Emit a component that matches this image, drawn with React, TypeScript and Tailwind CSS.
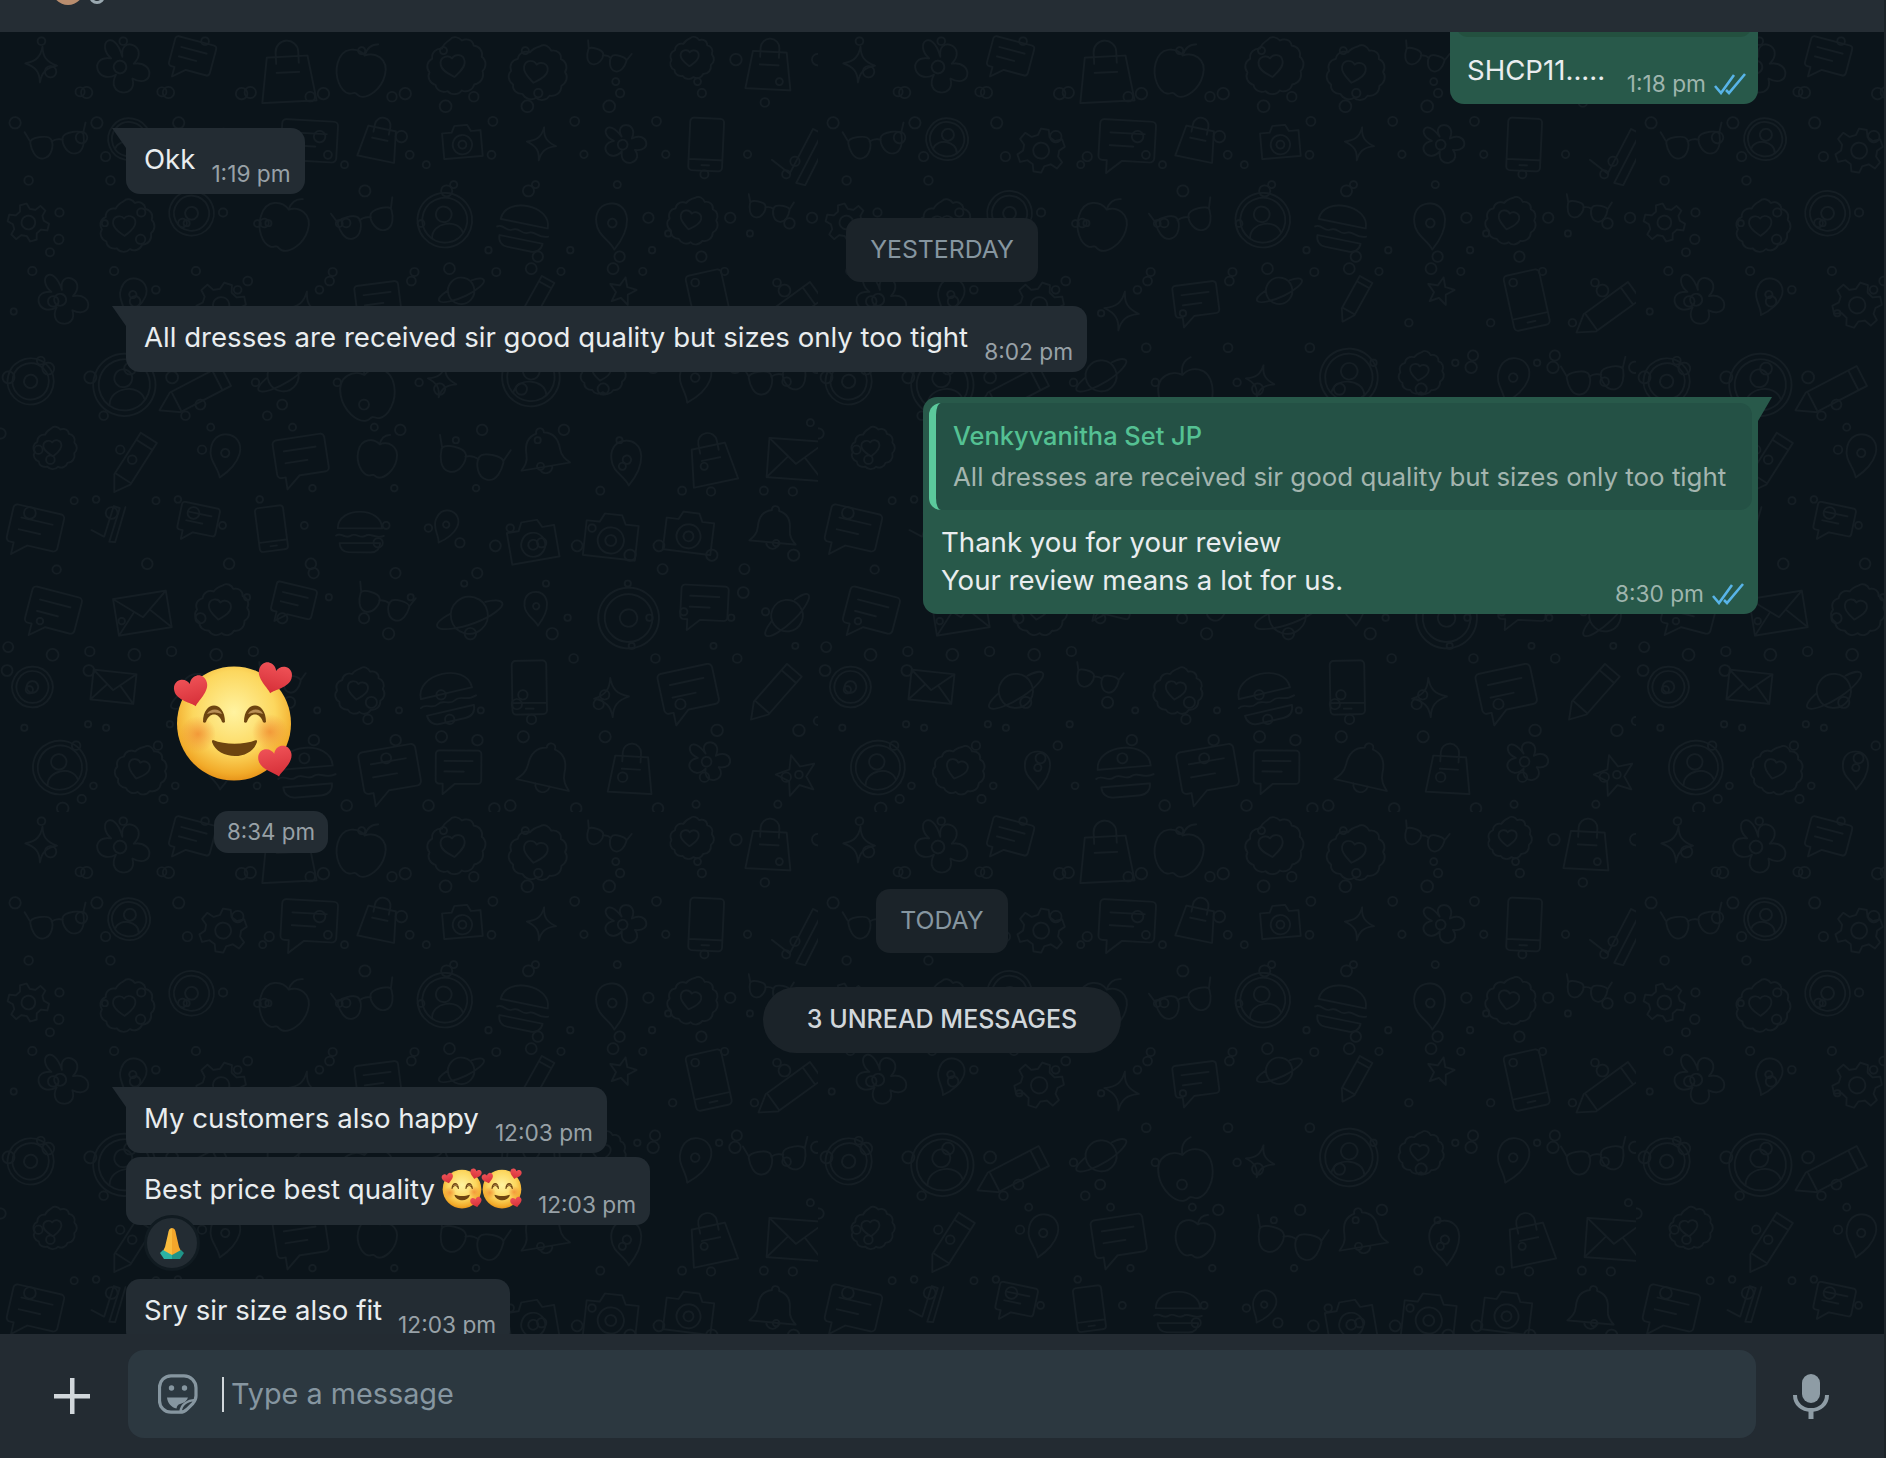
const FONT = "font-['Inter','Liberation_Sans',sans-serif]";

// doodles of the wallpaper, each one drawn in a 64 box
const DOODLES: Record<string, string> = {
  cloudHeart:
    "M32 6c4-4 9-1 11 2 5-2 10 1 10 6 5 1 8 6 6 11 4 4 3 10-1 13 1 6-3 11-9 11-2 5-8 7-12 4-4 4-10 3-13-1-5 1-10-2-10-7-5-2-7-8-4-12-3-5-1-10 4-12 0-6 5-9 10-8 2-4 6-6 8-7z M32 23c3-4 11-3 11 4 0 6-7 10-11 13-4-3-11-7-11-13 0-7 8-8 11-4z",
  star: "M32 14l5 12 13 1-10 9 3 13-11-7-11 7 3-13-10-9 13-1z",
  spark: "M32 14c1 10 5 15 16 18-11 3-15 8-16 18-1-10-5-15-16-18 11-3 15-8 16-18z",
  planet:
    "M32 14a18 18 0 1 0 .1 0z M14 36C6 44 3 50 6 52c4 3 20-4 34-15S62 14 59 11c-2-2-8-1-16 4",
  camera:
    "M8 20h12l4-8h16l4 8h12v32H8z M32 24a12 12 0 1 0 .1 0z M32 31a5 5 0 1 0 .1 0z",
  envelope: "M6 16h52v36H6z M6 16l26 22 26-22 M6 52l18-20 M58 52L40 32",
  glasses:
    "M4 24c0-6 20-6 22 0s-2 18-11 18S4 30 4 24z M38 24c2-6 22-6 22 0s-2 18-11 18-13-12-11-18z M26 26c4-2 8-2 12 0 M4 22L0 12 M60 22l4-10",
  bell: "M32 6a4 4 0 0 1 4 5c10 2 14 10 14 20 0 8 4 12 8 16H6c4-4 8-8 8-16 0-10 4-18 14-20a4 4 0 0 1 4-5z M25 47a7 7 0 0 0 14 0",
  pencil: "M44 6l14 14-36 36-18 4 4-18z M38 12l14 14 M10 42l12 12",
  apple:
    "M32 20c8-6 24-4 24 14 0 14-10 26-18 26-3 0-4-2-6-2s-3 2-6 2C18 60 8 48 8 34c0-18 16-20 24-14z M32 20c0-6 2-12 10-14",
  flower:
    "M32 22c-8-20 24-16 12 4 20-8 24 20 2 14 10 18-22 22-16 0-16 14-30-12-8-14-18-10-4-30 10-4z M32 26a6 6 0 1 0 .1 0z",
  wheel: "M32 4a28 28 0 1 0 .1 0z M32 10a22 22 0 1 0 .1 0z M32 24a8 8 0 1 0 .1 0z",
  bag: "M14 20h36l6 40H8z M22 26v-10a10 10 0 0 1 20 0v10 M22 34h20",
  burger:
    "M8 28c0-24 48-24 48 0z M6 36c6-4 10 4 16 0s10 4 16 0 10 4 20 0 M10 44h44c0 6-4 10-10 10H20c-6 0-10-4-10-10z",
  phone: "M18 4h28a4 4 0 0 1 4 4v48a4 4 0 0 1-4 4H18a4 4 0 0 1-4-4V8a4 4 0 0 1 4-4z M14 48h36 M28 54h8",
  bubble: "M10 8h44a4 4 0 0 1 4 4v30a4 4 0 0 1-4 4H28L14 58V46h-4a4 4 0 0 1-4-4V12a4 4 0 0 1 4-4z M16 20h32 M16 32h22",
  person: "M32 4a28 28 0 1 0 .1 0z M32 9a23 23 0 1 0 .1 0z M32 18a8 8 0 1 0 .1 0z M16 48c2-16 30-16 32 0",
  pin: "M32 10c10 0 16 8 14 18-2 9-10 18-18 24-2-10-12-16-10-28 1-8 6-14 14-14z M32 24a4 4 0 1 0 .1 0z",
  check: "M8 36l16 12L44 8l8 4-22 44 8 2L60 12",
  gear: "M28 10h8l2 7 6 3 7-3 4 7-5 5v6l5 5-4 7-7-3-6 3-2 7h-8l-2-7-6-3-7 3-4-7 5-5v-6l-5-5 4-7 7 3 6-3z M32 24a8 8 0 1 0 .1 0z",
};

const KINDS = Object.keys(DOODLES);
const TILE_W = 818;
const TILE_H = 780;

// fixed pseudo random, so the wallpaper comes out the same every time
function rand(i: number) {
  const x = Math.sin(i * 127.1 + 3.7) * 43758.5453;
  return x - Math.floor(x);
}

function Wallpaper() {
  const cols = 10;
  const rows = 10;
  const cw = TILE_W / cols;
  const ch = TILE_H / rows;
  const items: { kind: string; x: number; y: number; s: number; r: number }[] = [];
  const dots: { x: number; y: number; r: number }[] = [];
  for (let row = 0; row < rows; row++) {
    for (let col = 0; col < cols; col++) {
      const i = row * cols + col;
      items.push({
        kind: KINDS[Math.floor(rand(i) * KINDS.length)],
        x: col * cw + (row % 2) * 20 + rand(i + 100) * 10,
        y: row * ch + rand(i + 200) * 10,
        s: 0.7 + rand(i + 300) * 0.45,
        r: (rand(i + 400) - 0.5) * 36,
      });
      for (let d = 0; d < 3; d++) {
        dots.push({
          x: col * cw + rand(i + 500 + d) * cw,
          y: row * ch + rand(i + 600 + d) * ch,
          r: 3 + rand(i + 700 + d) * 3,
        });
      }
    }
  }
  return (
    <svg className="absolute inset-0 h-full w-full" aria-hidden="true">
      <defs>
        <pattern id="doodles" width={TILE_W} height={TILE_H} patternUnits="userSpaceOnUse">
          {items.map((it, i) => (
            <path
              key={i}
              d={DOODLES[it.kind]}
              fill="none"
              stroke="#151e24"
              strokeWidth={1.7}
              vectorEffect="non-scaling-stroke"
              strokeLinejoin="round"
              strokeLinecap="round"
              transform={`translate(${it.x} ${it.y}) rotate(${it.r} 32 32) scale(${it.s})`}
            />
          ))}
          {dots.map((d, i) => (
            <circle key={i} cx={d.x} cy={d.y} r={d.r} fill="none" stroke="#151e24" strokeWidth={1.7} />
          ))}
        </pattern>
      </defs>
      <rect width="100%" height="100%" fill="url(#doodles)" />
    </svg>
  );
}

function Heart({ x, y, s, r }: { x: number; y: number; s: number; r: number }) {
  return (
    <path
      transform={`translate(${x} ${y}) rotate(${r}) scale(${s})`}
      d="M0 14C-3 10-16 4-16-5-16-11-12-14-8-14-4-14-1-11 0-8 1-11 4-14 8-14 12-14 16-11 16-5 16 4 3 10 0 14z"
      fill="url(#emojiHeart)"
    />
  );
}

// the smiling face with hearts
function FaceEmoji({ size }: { size: number }) {
  return (
    <svg width={size} height={size} viewBox="0 0 118 118" overflow="visible" className="shrink-0">
      <circle cx="59" cy="59.500" r="57" fill="url(#emojiFace)" />
      <circle cx="23" cy="70" r="18" fill="url(#emojiCheek)" />
      <circle cx="95" cy="68" r="18" fill="url(#emojiCheek)" />
      <path d="M28 58c0-22 22-22 22 0-1 1-2 1-3 0-3-10-13-10-16 0-1 1-2 1-3 0z" fill="#6d4410" />
      <path d="M69 58c0-22 22-22 22 0-1 1-2 1-3 0-3-10-13-10-16 0-1 1-2 1-3 0z" fill="#6d4410" />
      <path d="M32 50c3-6 13-6 15 0-5-2-10-2-15 0z" fill="#b98f55" />
      <path d="M73 50c3-6 13-6 15 0-5-2-10-2-15 0z" fill="#b98f55" />
      <path d="M38 76c12 5 31 5 43 0 1 0 1 1 1 2-3 9-12 14-22 14s-20-5-23-14c0-1 0-2 1-2z" fill="#6d4410" />
      <Heart x={17} y={28} s={1.05} r={-15} />
      <Heart x={99} y={15} s={1.05} r={15} />
      <Heart x={101} y={98} s={1.05} r={-12} />
    </svg>
  );
}

// shared gradients of the emoji, they sit once at the root
function EmojiDefs() {
  return (
    <svg width="0" height="0" className="absolute" aria-hidden="true">
      <defs>
        <radialGradient id="emojiFace" cx="50%" cy="40%" r="60%">
          <stop offset="0%" stopColor="#fff3a0" />
          <stop offset="60%" stopColor="#fcd75e" />
          <stop offset="90%" stopColor="#f2ab2a" />
          <stop offset="100%" stopColor="#e8951a" />
        </radialGradient>
        <radialGradient id="emojiCheek">
          <stop offset="0%" stopColor="#f08a30" stopOpacity="0.8" />
          <stop offset="100%" stopColor="#f08a30" stopOpacity="0" />
        </radialGradient>
        <linearGradient id="emojiHeart" x1="0" y1="0" x2="0" y2="1">
          <stop offset="0%" stopColor="#ee5156" />
          <stop offset="100%" stopColor="#d62f38" />
        </linearGradient>
      </defs>
    </svg>
  );
}

function PrayEmoji() {
  return (
    <svg width="24" height="32" viewBox="0 0 24 32">
      <path d="M12 1c-2.500 0-3.500 2-4 6L5 20l-3 6 10 3z" fill="#fabc3d" />
      <path d="M12 1c2.500 0 3.500 2 4 6l3 13 3 6-10 3z" fill="#f3a62b" />
      <path d="M0 26l3-3 9 5v4H4z" fill="#2bb3a3" />
      <path d="M24 26l-3-3-9 5v4h8z" fill="#1f9488" />
    </svg>
  );
}

function Ticks() {
  return (
    <svg width="32" height="22" viewBox="0 0 32 22" fill="none" stroke="#58b4e8" strokeWidth="2.600" className="shrink-0">
      <path d="M1 13l6 7L20 2" />
      <path d="M12 17l3 3L31 1" />
    </svg>
  );
}

function Time({ t, read }: { t: string; read?: boolean }) {
  return (
    <span
      className={`flex shrink-0 items-center gap-2 self-end whitespace-nowrap text-[22.700px] leading-[28px] ${
        read ? "text-[#9fb5ae]" : "text-[#98a1a7]"
      }`}
    >
      {t}
      {read && <Ticks />}
    </span>
  );
}

function Incoming({ text, time, tail, emoji, className = "" }: { text: string; time: string; tail?: boolean; emoji?: boolean; className?: string }) {
  return (
    <div
      className={`relative flex w-fit gap-4 self-start rounded-[14px] bg-[#232c33] pt-3 pb-[6px] pr-[14px] pl-[18px] text-[#e9edef] ${
        tail ? "rounded-tl-none" : ""
      } ${className}`}
    >
      {tail && (
        <span className="absolute top-0 left-[-14px] h-[20px] w-[14px] bg-[#232c33] [clip-path:polygon(0_0,100%_0,100%_100%)]" />
      )}
      <span className="flex items-center whitespace-nowrap pb-[10px] text-[27.600px] leading-[38px]">
        {text}
        {emoji && (
          <span className="ml-[7px] flex">
            <FaceEmoji size={40} />
            <FaceEmoji size={40} />
          </span>
        )}
      </span>
      <Time t={time} />
    </div>
  );
}

function DatePill({ label, className = "" }: { label: string; className?: string }) {
  return (
    <div className={`flex h-16 items-center self-center rounded-[14px] bg-[#1b2329] px-6 text-[24.800px] text-[#8696a0] ${className}`}>
      {label}
    </div>
  );
}

function StickerIcon() {
  return (
    <svg width="40" height="40" viewBox="0 0 40 40" fill="none" stroke="#8696a0" strokeWidth="3.200" className="shrink-0">
      <path d="M13 1.800h13a12 12 0 0 1 12 12v8c0 3-1.200 5.500-3 7.500l-5.500 5.500c-2 2-4.500 3.400-7.500 3.400H13a11.500 11.500 0 0 1-11.500-11.500V13.300A11.500 11.500 0 0 1 13 1.800z" />
      <circle cx="13.500" cy="14" r="2.700" fill="#8696a0" stroke="none" />
      <circle cx="26.500" cy="14" r="2.700" fill="#8696a0" stroke="none" />
      <path d="M9 23.500h21c-1 3.500-4 5.500-8 6.500-2 .6-3 2-3.500 4.500-5-1-9-5.500-9.500-11z" fill="#8696a0" stroke="none" />
      <path d="M37 26c-7 .5-14 4-14.500 12" strokeWidth="2.600" />
    </svg>
  );
}

export default function App() {
  return (
    <div className={`flex h-[1458px] w-[1886px] flex-col overflow-hidden border-r-2 border-[#1d2429] bg-[#0b141a] ${FONT}`}>
      <EmojiDefs />
      <header className="flex h-8 shrink-0 gap-[5px] overflow-hidden bg-[#252d34] pl-[52px]">
        <span className="mt-[-30px] h-[35px] w-[32px] rounded-full bg-[#b98d6e]" />
        <span className="mt-[-12px] h-[16px] w-[16px] rounded-full border-[3px] border-[#9aa8b0]" />
      </header>

      <main className="relative min-h-0 flex-1 overflow-hidden">
        <Wallpaper />
        <div className="relative flex flex-col pr-[126px] pl-[126px]">
          {/* image message, cut off by the header */}
          <div className="mt-[-20px] flex w-[308px] flex-col self-end rounded-[14px] bg-[#28594a] px-[6px] pt-[6px] pb-[6px]">
            <div className="flex h-[19px] justify-end overflow-hidden rounded-b-[12px] bg-[#23503f] pr-[4px]">
              <span className="h-[6px] w-[112px] bg-[linear-gradient(90deg,#fff_0_68%,#222_68%_70%,#fff_70%_72%,#222_72%_75%,#ddd_75%_80%,#333_80%_84%,#eee_84%_100%)]" />
            </div>
            <div className="flex items-end justify-between pt-[14px] pr-[6px] pl-[11px]">
              <span className="pb-[9px] text-[27.600px] leading-[38px] text-[#e9edef]">SHCP11.....</span>
              <Time t="1:18 pm" read />
            </div>
          </div>

          <Incoming tail text="Okk" time="1:19 pm" className="mt-6" />
          <DatePill label="YESTERDAY" className="mt-6" />
          <Incoming tail text="All dresses are received sir good quality but sizes only too tight" time="8:02 pm" className="mt-6" />

          {/* reply */}
          <div className="relative mt-[25px] flex w-[835px] flex-col self-end rounded-[14px] rounded-tr-none bg-[#28594a] p-[6px]">
            <span className="absolute top-0 right-[-14px] h-[24px] w-[14px] bg-[#28594a] [clip-path:polygon(0_0,100%_0,0_100%)]" />
            <div className="flex h-[107px] flex-col gap-[5px] rounded-[12px] border-l-[7px] border-[#5bc99c] bg-[#245145] pt-[14px] pl-[17px]">
              <span className="text-[25.400px] leading-[38px] font-medium text-[#54c193]">Venkyvanitha Set JP</span>
              <span className="text-[25.900px] leading-[34px] whitespace-nowrap text-[#a3b5af]">
                All dresses are received sir good quality but sizes only too tight
              </span>
            </div>
            <div className="flex items-end justify-between pt-[13px] pr-[8px] pl-[12px]">
              <p className="pb-[9px] text-[27.600px] leading-[38px] text-[#e9edef]">
                Thank you for your review
                <br />
                Your review means a lot for us.
              </p>
              <Time t="8:30 pm" read />
            </div>
          </div>

          {/* sticker */}
          <div className="mt-[50px] ml-[49px] self-start">
            <FaceEmoji size={118} />
          </div>
          <div className="mt-[29px] ml-[88px] flex h-[42px] w-[114px] items-center justify-center self-start rounded-[14px] bg-[#232c33] text-[22.300px] text-[#98a1a7]">
            8:34 pm
          </div>

          <DatePill label="TODAY" className="mt-9" />
          <div className="mt-[34px] flex h-[66px] w-[358px] items-center justify-center self-center rounded-full bg-[#1b2329] text-[25px] font-medium whitespace-nowrap text-[#d1d7db]">
            3 UNREAD MESSAGES
          </div>

          <Incoming tail text="My customers also happy" time="12:03 pm" className="mt-[34px]" />
          <Incoming emoji text="Best price best quality" time="12:03 pm" className="mt-1" />
          <div className="z-10 mt-[-10px] ml-[18px] flex h-[56px] w-[56px] items-center justify-center self-start rounded-full border-[3px] border-[#111b21] bg-[#232c33]">
            <PrayEmoji />
          </div>
          <Incoming text="Sry sir size also fit" time="12:03 pm" className="mt-2" />
        </div>
      </main>

      <footer className="flex h-[124px] shrink-0 items-center bg-[#232b32] pb-[4px]">
        <div className="flex w-[128px] shrink-0 justify-center pl-[16px]">
          <svg width="38" height="38" viewBox="0 0 38 38" fill="#d1d7db" className="mt-[3px]">
            <rect x="17" y="1" width="4.500" height="36" />
            <rect x="1" y="17" width="36" height="4.500" />
          </svg>
        </div>
        <div className="flex h-[88px] w-[1628px] items-center rounded-[16px] bg-[#2c3840] pl-[30px]">
          <StickerIcon />
          <span className="ml-[24px] h-[35px] w-[2px] bg-[#d1d7db]" />
          <span className="ml-[7px] text-[28.800px] text-[#8696a0]">Type a message</span>
        </div>
        <div className="flex flex-1 justify-center pr-[18px]">
          <svg width="36" height="46" viewBox="0 0 36 46" fill="none" className="mt-[3px]">
            <rect x="9" y="1" width="18" height="29" rx="9" fill="#8e9ca5" />
            <path d="M2 22c0 9 7 15 16 15s16-6 16-15" stroke="#8e9ca5" strokeWidth="4" />
            <path d="M18 36v10" stroke="#8e9ca5" strokeWidth="5" />
          </svg>
        </div>
      </footer>
    </div>
  );
}
